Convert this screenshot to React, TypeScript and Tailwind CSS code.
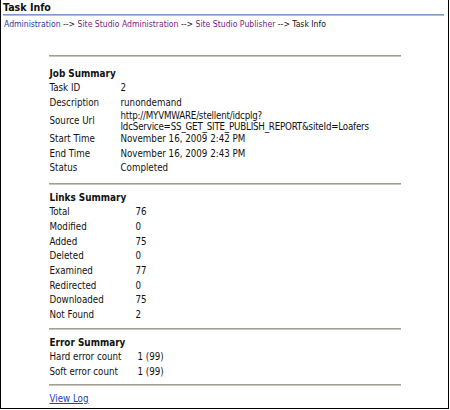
const body = "font-['DejaVu_Sans_Condensed','DejaVu_Sans','Liberation_Sans',sans-serif] text-[9.7px]";

const Row = ({ label, value, labelW, h = "h-[14.5px]" }: { label: string; value: React.ReactNode; labelW: string; h?: string }) => (
  <div className={`flex ${h} items-center pl-[1px]`}>
    <div className={labelW}>{label}</div>
    <div>{value}</div>
  </div>
);

const Heading = ({ children }: { children: string }) => (
  <div className="flex h-[14.5px] items-center pl-[1px] text-[9.9px] font-bold">{children}</div>
);

const Rule = ({ className = "my-[6px]" }: { className?: string }) => (
  <div className={`${className} h-[2px] border-t border-t-[#a19f95] bg-[#c8c6bc]`} />
);

export default function App() {
  const links: [string, string][] = [
    ["Total", "76"],
    ["Modified", "0"],
    ["Added", "75"],
    ["Deleted", "0"],
    ["Examined", "77"],
    ["Redirected", "0"],
    ["Downloaded", "75"],
    ["Not Found", "2"],
  ];

  return (
    <div className={`${body} h-[409px] w-[449px] border-x border-b border-black bg-white text-[#111]`}>
      <div className="pl-[2px] pr-[4px]">
        <div className="h-[14px] pt-[1px] text-[10.6px] font-bold leading-[13px]">Task Info</div>
        <div className="h-[2px] border-t border-t-[#7c9bc9] bg-[#a9bfe0]" />
        <div className="pl-[1px] pt-[1px] text-[8.6px] leading-[14px]">
          <a className="text-[#1f3c9c]">Administration</a> --&gt;{" "}
          <a className="text-[#7d1a86]">Site Studio Administration</a> --&gt;{" "}
          <a className="text-[#7d1a86]">Site Studio Publisher</a> --&gt; Task Info
        </div>
      </div>

      <div className="mx-auto mt-[24px] w-[352px]">
        <Rule className="" />

        <div className="mt-[9.75px]">
          <Heading>Job Summary</Heading>
          <Row labelW="w-[71px]" label="Task ID" value="2" />
          <Row labelW="w-[71px]" label="Description" value="runondemand" />
          <div className="flex h-[22px] items-center pl-[1px]">
            <div className="w-[71px]">Source Url</div>
            <div className="leading-[11px] tracking-[-0.2px]">
              http://MYVMWARE/stellent/idcplg?
              <br />
              IdcService=SS_GET_SITE_PUBLISH_REPORT&amp;siteId=Loafers
            </div>
          </div>
          <Row labelW="w-[71px]" label="Start Time" value="November 16, 2009 2:42 PM" />
          <Row labelW="w-[71px]" label="End Time" value="November 16, 2009 2:43 PM" />
          <Row labelW="w-[71px]" label="Status" value="Completed" />
        </div>

        <Rule className="mb-[6px] mt-[7px]" />

        <Heading>Links Summary</Heading>
        {links.map(([l, v]) => (
          <Row key={l} h="h-[14.7px]" labelW="w-[86px]" label={l} value={v} />
        ))}

        <Rule className="mb-[6px] mt-[5px]" />

        <Heading>Error Summary</Heading>
        <Row labelW="w-[88px]" label="Hard error count" value="1 (99)" />
        <Row labelW="w-[88px]" label="Soft error count" value="1 (99)" />

        <Rule className="mb-[6px] mt-[5px]" />

        <div className="flex h-[14.5px] items-center pl-[1px]">
          <a className="text-[#2341b5] underline">View Log</a>
        </div>
      </div>
    </div>
  );
}
